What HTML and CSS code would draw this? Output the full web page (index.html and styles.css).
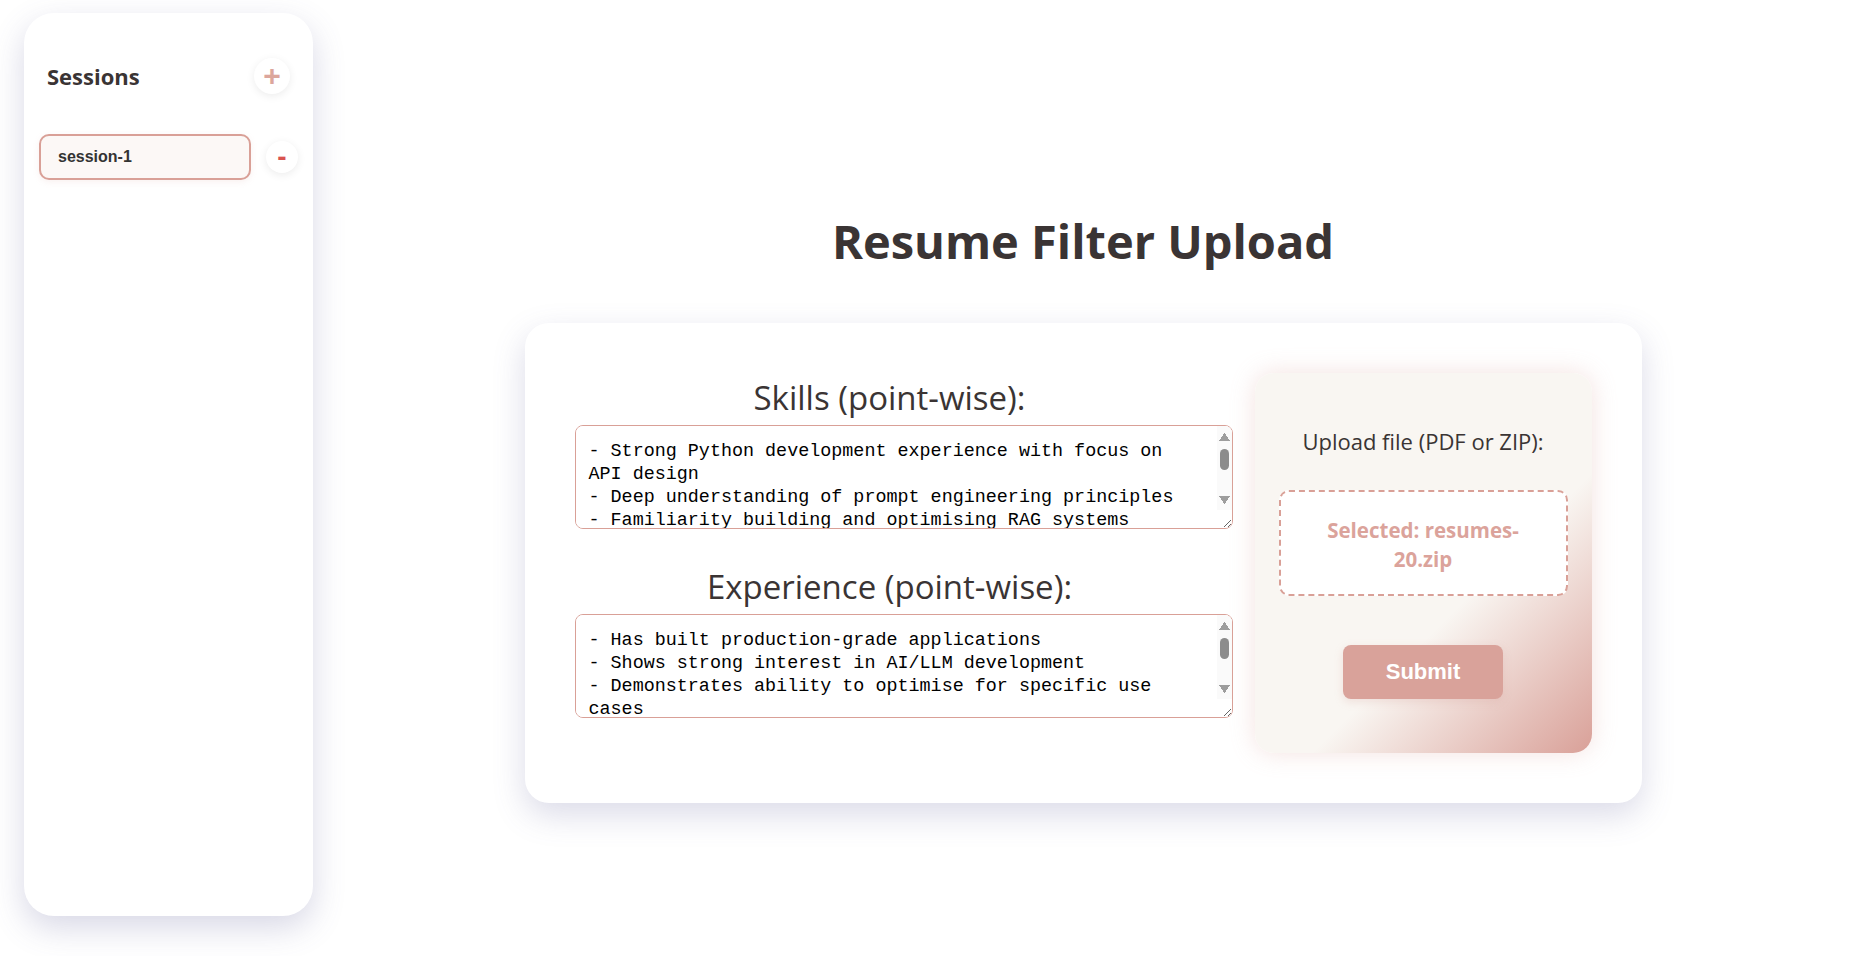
FILE: index.html
```html
<!DOCTYPE html>
<html lang="en">
<head>
    <meta charset="UTF-8">
    <meta name="viewport" content="width=device-width, initial-scale=1.0">
    <title>Resume Filter Upload</title>
    <link rel="stylesheet" href="styles.css">
</head>
<body>
<div class="app">
    <aside class="sidebar">
        <div class="sidebar-header">
            <h2>Sessions</h2>
            <button class="round-btn add-btn" title="New session">+</button>
        </div>
        <ul class="session-list">
            <li class="session-row">
                <div class="session-item active">session-1</div>
                <button class="round-btn remove-btn" title="Delete session">-</button>
            </li>
        </ul>
    </aside>

    <main class="main">
        <h1>Resume Filter Upload</h1>
        <div class="card">
            <div class="fields">
                <label for="skills">Skills (point-wise):</label>
                <div class="textarea-wrap">
                    <textarea id="skills">- Strong Python development experience with focus on API design
- Deep understanding of prompt engineering principles
- Familiarity building and optimising RAG systems
- Experience working with vector databases
- Comfortable with async programming
- Good grasp of testing and CI workflows</textarea>
                    <div class="fake-scroll"><div class="sb-up"></div><div class="sb-thumb"></div><div class="sb-down"></div></div>
                </div>

                <label for="experience">Experience (point-wise):</label>
                <div class="textarea-wrap">
                    <textarea id="experience">- Has built production-grade applications
- Shows strong interest in AI/LLM development
- Demonstrates ability to optimise for specific use cases
- Has shipped features end to end
- Worked in small, fast-moving teams
- Contributed to open source projects</textarea>
                    <div class="fake-scroll"><div class="sb-up"></div><div class="sb-thumb"></div><div class="sb-down"></div></div>
                </div>
            </div>

            <div class="upload-panel">
                <p class="upload-label">Upload file (PDF or ZIP):</p>
                <div class="drop-zone">Selected: resumes-20.zip</div>
                <button class="submit-btn">Submit</button>
            </div>
        </div>
    </main>
</div>
</body>
</html>
```

FILE: styles.css
```css
body, html {
    margin: 0;
    padding: 0;
    height: 100%;
    overflow: hidden;
    font-family: "Open Sans", Arial, sans-serif;
    background-color: #ffffff;
    color: #3a3434;
}
.app {
    display: flex;
    height: 100%;
}

/* sidebar */
.sidebar {
    flex-shrink: 0;
    width: 289px;
    height: calc(100vh - 53px);
    margin: 13px 0 0 24px;
    padding: 15px;
    box-sizing: border-box;
    background-color: #ffffff;
    border-radius: 30px;
    box-shadow: 0 12px 32px rgba(90, 90, 150, 0.24);
}
.sidebar-header {
    display: flex;
    align-items: center;
    justify-content: space-between;
    padding: 30px 8px 40px;
}
.sidebar-header h2 {
    margin: 0;
    font-size: 22px;
    font-weight: bold;
    color: #3a3434;
}
.round-btn {
    display: flex;
    align-items: center;
    justify-content: center;
    padding: 0;
    border: none;
    border-radius: 50%;
    background-color: #ffffff;
    box-shadow: 0 2px 8px rgba(0, 0, 0, 0.08);
    font-family: "Liberation Sans", Arial, sans-serif;
    font-weight: bold;
    line-height: 1;
    cursor: pointer;
}
.add-btn {
    width: 36px;
    height: 36px;
    font-size: 30px;
    color: #dca69c;
}
.remove-btn {
    width: 32px;
    height: 32px;
    font-size: 28px;
    color: #d9534f;
}
.session-list {
    list-style: none;
    margin: 0;
    padding: 0;
}
.session-row {
    display: flex;
    align-items: center;
    gap: 15px;
}
.session-item {
    flex: 1;
    padding: 12px 17px;
    border: 2px solid #d9a097;
    border-radius: 10px;
    background-color: #fcf8f6;
    font-family: "Liberation Sans", Arial, sans-serif;
    font-size: 16px;
    font-weight: bold;
    line-height: 18px;
    color: #333333;
    box-shadow: 0 2px 6px rgba(217, 160, 151, 0.15);
}

/* main area */
.main {
    flex: 1;
    padding: 209px 20px 0 0;
}
.main h1 {
    margin: 0;
    text-align: center;
    font-size: 47px;
    line-height: 65px;
    font-weight: bold;
    color: #3a3434;
}
.card {
    display: flex;
    gap: 50px;
    width: 1117px;
    margin: 49px auto 0;
    padding: 50px;
    box-sizing: border-box;
    background-color: #ffffff;
    border-radius: 24px;
    box-shadow: 0 12px 32px rgba(90, 90, 150, 0.22);
}
.fields {
    flex: 1;
    min-width: 0;
}
.fields label {
    display: block;
    padding-top: 3px;
    margin-bottom: 5px;
    text-align: center;
    font-size: 33px;
    line-height: 44px;
    color: #3a3434;
}
.textarea-wrap {
    position: relative;
    margin: 0 -28px 33px 0;
}
.textarea-wrap:last-child {
    margin-bottom: 0;
}
.textarea-wrap textarea {
    display: block;
    width: 100%;
    height: 104px;
    margin: 0;
    padding: 14px 28px 12px 13px;
    box-sizing: border-box;
    border: 1px solid #d9a097;
    border-radius: 8px;
    font-family: "Liberation Mono", monospace;
    font-size: 18.4px;
    line-height: 23px;
    color: #000000;
    background-color: #ffffff;
    outline: none;
}

/* textarea scrollbar look */
.fake-scroll {
    position: absolute;
    top: 1px;
    right: 1px;
    width: 15px;
    height: 84px;
    display: flex;
    flex-direction: column;
    background-color: #fafafa;
    border-top-right-radius: 7px;
    pointer-events: none;
}
.sb-up,
.sb-down {
    height: 22px;
    background-repeat: no-repeat;
    background-position: center;
    background-size: 11px 8px;
}
.sb-up {
    background-image: conic-gradient(from 145deg at 50% 0, #9d9d9d 0 70deg, transparent 0);
}
.sb-down {
    height: 20px;
    margin-top: auto;
    background-image: conic-gradient(from -35deg at 50% 100%, #9d9d9d 0 70deg, transparent 0);
}
.sb-thumb {
    height: 21px;
    margin: 1px 3px 0;
    border-radius: 5px;
    background-color: #8c8c8c;
}

/* upload panel */
.upload-panel {
    flex-shrink: 0;
    width: 337px;
    padding: 54px 24px;
    box-sizing: border-box;
    text-align: center;
    border-radius: 19px;
    background: linear-gradient(135deg, #f9f6f2 61%, #d9a098 100%);
    box-shadow: 0 0 25px rgba(217, 160, 151, 0.3);
}
.upload-label {
    margin: 0 0 34px;
    font-size: 22px;
    line-height: 29px;
    color: #3a3434;
}
.drop-zone {
    margin-bottom: 49px;
    padding: 24px 30px 20px;
    border: 2px dashed #d9a097;
    border-radius: 10px;
    background-color: #ffffff;
    font-size: 20.5px;
    font-weight: bold;
    line-height: 29px;
    color: #dba39b;
}
.submit-btn {
    padding: 14px 43px;
    border: none;
    border-radius: 8px;
    background-color: #d9a29a;
    color: #ffffff;
    font-family: "Liberation Sans", Arial, sans-serif;
    font-size: 22px;
    font-weight: bold;
    line-height: 26px;
    box-shadow: 0 3px 8px rgba(217, 160, 151, 0.25);
    cursor: pointer;
}
```
